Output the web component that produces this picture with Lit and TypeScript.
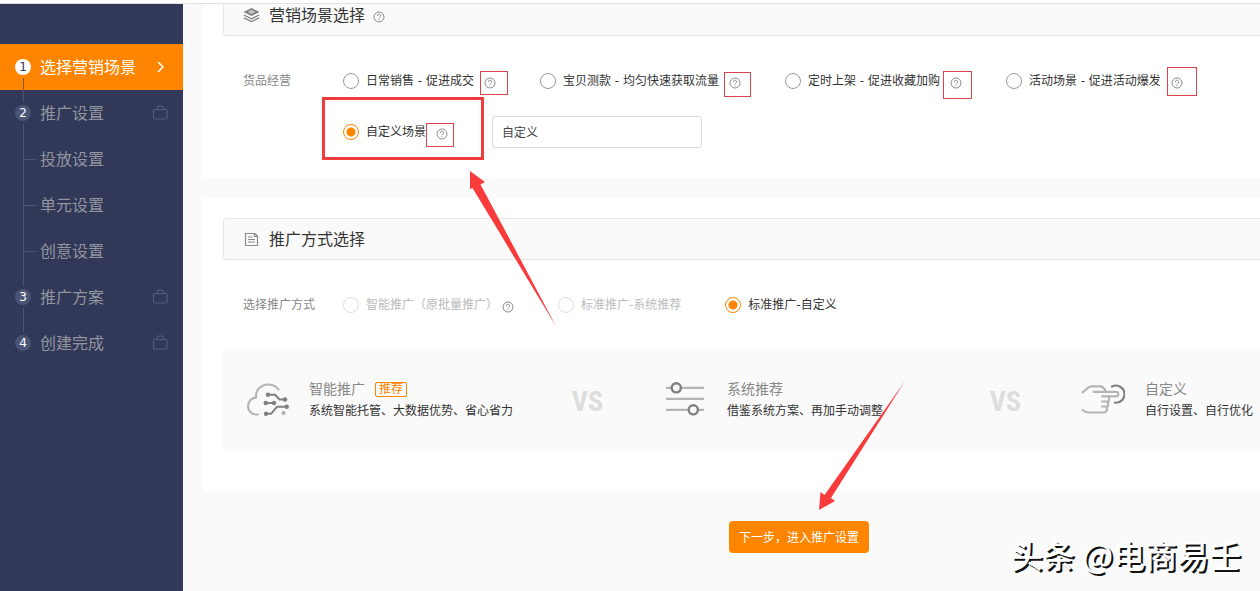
import { LitElement, html, css, svg, nothing } from "lit";
import { customElement, property } from "lit/decorators.js";

interface Step {
  label: string;
  no?: number;
  active?: boolean;
  last?: boolean;
}

const STEPS: Step[] = [
  { no: 1, label: "选择营销场景", active: true },
  { no: 2, label: "推广设置" },
  { label: "投放设置" },
  { label: "单元设置" },
  { label: "创意设置" },
  { no: 3, label: "推广方案" },
  { no: 4, label: "创建完成", last: true },
];

const SCENES = [
  "日常销售 - 促进成交",
  "宝贝测款 - 均匀快速获取流量",
  "定时上架 - 促进收藏加购",
  "活动场景 - 促进活动爆发",
];

const helpIcon = html`<svg width="12" height="12" viewBox="0 0 12 12" fill="none" stroke="currentColor">
  <circle cx="6" cy="6" r="5" />
  <path d="M4.4 4.9a1.6 1.6 0 1 1 2.4 1.3c-.6.3-.8.6-.8 1.1" />
  <path d="M6 8.2v1" />
</svg>`;

const bagIcon = html`<svg width="16" height="16" viewBox="0 0 16 16" fill="none" stroke="currentColor" stroke-width="1.200">
  <rect x="1.500" y="4.500" width="13.500" height="9.500" rx="1" />
  <path d="M4.500 4.500C4.800 1.800 6.200.8 8.200.8s3.400 1 3.700 3.700" />
</svg>`;

const chevronIcon = html`<svg width="16" height="16" viewBox="0 0 16 16" fill="none" stroke="currentColor" stroke-width="1.500">
  <path d="M6 3l5 5-5 5" />
</svg>`;

const layersIcon = html`<svg width="18" height="16" viewBox="0 0 18 16">
  <path d="M8.500 1l8 4-8 4-8-4z" fill="#808080" />
  <path d="M8.500 2.800l4 2.100-4 2.100-4-2.100z" fill="#c4c4c4" />
  <g fill="none" stroke="#808080" stroke-width="1.300">
    <path d="M.8 8l7.700 3.800L16.200 8" />
    <path d="M.8 10.800l7.700 3.800 7.700-3.800" />
  </g>
</svg>`;

const docIcon = html`<svg width="18" height="16" viewBox="0 0 18 16" fill="none" stroke="#8a8a8a" stroke-width="1.200">
  <path d="M2.500 2.500H12L14.500 5v9.500h-12z" />
  <path d="M11.500 2.500v3h3" />
  <path d="M5 6h4.500M5 8.500h7M5 11h7" />
</svg>`;

const cloudIcon = html`<svg width="44" height="36" viewBox="0 0 44 36" fill="none" stroke-linecap="round" stroke-linejoin="round">
  <path d="M13 32.500H11C6.500 32.500 3 28.500 3 24c0-4.300 3.300-8 8-8.300V14C11 7.500 16.500 2.500 23 2.500c4.500 0 8 1.800 10.500 5" stroke="#b5b5b5" stroke-width="2.200" />
  <g stroke="#808080" stroke-width="2">
    <path d="M23 12.800h7l4.500 4.700h5" />
    <path d="M21 21h7" />
    <path d="M21 31.800h5l6-7h9" />
  </g>
  <g fill="#808080">
    <circle cx="23" cy="12.800" r="2.200" />
    <circle cx="40" cy="17.500" r="2.200" />
    <circle cx="20.700" cy="21" r="2.200" />
    <circle cx="29" cy="21" r="2.200" />
    <circle cx="21" cy="31.800" r="2.200" />
    <circle cx="41.800" cy="24.800" r="2.200" />
  </g>
  <circle cx="38.500" cy="31" r="2" fill="#b0b0b0" />
</svg>`;

const slidersIcon = html`<svg width="44" height="36" viewBox="0 0 44 36" fill="none">
  <path d="M3 5.800h38M3 16.800h38M3 27.800h38" stroke="#b5b5b5" stroke-width="2.200" />
  <g fill="#fafafa" stroke="#808080" stroke-width="2.400">
    <circle cx="13.300" cy="5.800" r="4.600" />
    <circle cx="30.300" cy="27.800" r="4.600" />
  </g>
</svg>`;

const handIcon = html`<svg width="44" height="36" viewBox="0 0 44 36" fill="none" stroke="#b5b5b5" stroke-width="2.200" stroke-linecap="round" stroke-linejoin="round">
  <path d="M1.500 10.500L7 5.800C8.200 4.800 9.200 4.400 10.500 4.400h8.500c1.800 0 3 .6 4 2l1.500 2.600" />
  <path d="M12.500 9.800H35a2.300 2.300 0 0 1 0 4.600H21" />
  <path d="M28 14.800V18q0 1.500-1.500 1.500H21" />
  <path d="M27 20v3q0 1.500-1.500 1.500H21" />
  <path d="M26 25v1.500q0 4-3.500 4H8Q4.500 30.500 1.500 28" />
  <path d="M31 4.500a8.600 8.600 0 1 1 3 16.200" stroke="#808080" />
</svg>`;

@customElement("help-tip")
export class HelpTip extends LitElement {
  static styles = css`
    :host {
      display: inline-flex;
    }
    .tip {
      display: flex;
      padding: 3px 0 0;
      border: 0;
      background: none;
      color: #8c8c8c;
      cursor: help;
    }
  `;
  render() {
    return html`<button class="tip" type="button" aria-label="帮助">${helpIcon}</button>`;
  }
}

@customElement("radio-option")
export class RadioOption extends LitElement {
  @property() label = "";
  @property({ type: Boolean }) checked = false;
  @property({ type: Boolean }) disabled = false;
  @property({ type: Boolean }) help = false;
  @property({ type: Boolean }) tight = false;

  static styles = css`
    :host {
      display: flex;
      align-items: center;
      flex: none;
      min-height: 32px;
      gap: 10px;
    }
    :host([tight]) {
      gap: 4px;
    }
    .option {
      display: flex;
      align-items: center;
      gap: 7px;
      color: #333;
      white-space: nowrap;
    }
    .radio {
      appearance: none;
      box-sizing: border-box;
      width: 16px;
      height: 16px;
      margin: 0;
      border: 1px solid #999;
      border-radius: 50%;
      background: #fff;
    }
    .radio:checked {
      border-color: #fd8500;
      background: radial-gradient(circle, #fd8500 4px, #fff 5px);
    }
    .radio:disabled {
      border-color: #ddd;
    }
    .disabled {
      color: #bbb;
    }
  `;
  render() {
    return html`<label class="option ${this.disabled ? "disabled" : ""}">
        <input class="radio" type="radio" .checked=${this.checked} ?disabled=${this.disabled} />
        <span>${this.label}</span>
      </label>
      ${this.help ? html`<help-tip></help-tip>` : nothing}`;
  }
}

@customElement("step-nav")
export class StepNav extends LitElement {
  static styles = css`
    :host {
      display: block;
      flex: none;
      box-sizing: border-box;
      width: 183px;
      padding-top: 40px;
      background: #313858;
    }
    .step {
      display: flex;
      align-items: center;
      height: 46px;
      padding: 0 15px;
      color: #92949f;
      font-size: 16px;
      line-height: 24px;
      text-decoration: none;
    }
    .active {
      background: #ff8500;
      color: #fff;
    }
    .marker {
      display: flex;
      flex-direction: column;
      align-items: center;
      align-self: stretch;
      gap: 3px;
      width: 16px;
      margin-right: 9px;
    }
    .line {
      flex: 1;
      width: 1px;
      background: #4d5473;
    }
    .active .line {
      background: #7d5c3c;
    }
    .marker .blank {
      background: none;
    }
    .no {
      width: 16px;
      height: 16px;
      border-radius: 50%;
      background: #4a5475;
      color: #fff;
      font-size: 12px;
      line-height: 16px;
      text-align: center;
    }
    .active .no {
      background: #fff;
      color: #313858;
    }
    .branch {
      display: flex;
      align-items: center;
      align-self: stretch;
      width: 13px;
      margin: 0 3px 0 8px;
      border-left: 1px solid #4d5473;
    }
    .tick {
      width: 13px;
      height: 1px;
      background: #4d5473;
    }
    .label {
      flex: 1;
      padding-top: 2px;
      white-space: nowrap;
    }
    .icon {
      display: flex;
      color: #535a79;
    }
    .active .icon {
      color: #fff;
    }
  `;
  render() {
    return html`<nav>
      ${STEPS.map(
        (s) => html`<a class="step ${s.active ? "active" : ""}" href="#">
          ${s.no
            ? html`<span class="marker">
                <span class="line ${s.active ? "blank" : ""}"></span>
                <span class="no">${s.no}</span>
                <span class="line ${s.last ? "blank" : ""}"></span>
              </span>`
            : html`<span class="branch"><span class="tick"></span></span>`}
          <span class="label">${s.label}</span>
          ${s.no ? html`<span class="icon">${s.active ? chevronIcon : bagIcon}</span>` : nothing}
        </a>`
      )}
    </nav>`;
  }
}

@customElement("app-root")
export class AppRoot extends LitElement {
  static styles = css`
    :host {
      display: flex;
      flex-direction: column;
      position: relative;
      box-sizing: border-box;
      min-height: 100vh;
      overflow: hidden;
      background: #fafafa;
      color: #333;
      font-family: "DejaVu Sans", "Noto Sans CJK SC", sans-serif;
      font-size: 12px;
      line-height: 20px;
    }
    .topbar {
      flex: none;
      height: 3px;
      border-bottom: 1px solid #e2e2e2;
      background: #fff;
    }
    .body {
      display: flex;
      flex: 1;
    }
    .main {
      flex: 1;
      min-width: 0;
      overflow: hidden;
    }
    .content {
      min-width: 1232px;
      margin-top: -30px;
    }
    .panel {
      margin: 0 0 20px 20px;
      padding: 20px 0 30px 20px;
      background: #fff;
    }
    .tall {
      padding-bottom: 40px;
      margin-bottom: 30px;
    }
    .head {
      display: flex;
      align-items: center;
      gap: 8px;
      box-sizing: border-box;
      height: 42px;
      padding: 0 19px;
      border: 1px solid #e6e6e6;
      border-radius: 3px;
      background: #fafafa;
    }
    .title {
      margin: 0;
      padding-top: 2px;
      color: #333;
      font-size: 16px;
      font-weight: 400;
      line-height: 24px;
    }
    .field {
      display: flex;
      margin: 29px 0 0 20px;
    }
    .name {
      flex: none;
      width: 100px;
      color: #888;
      line-height: 32px;
    }
    .rows {
      display: flex;
      flex-direction: column;
      gap: 19px;
    }
    .row {
      display: flex;
      gap: 44px;
    }
    .text {
      box-sizing: border-box;
      width: 210px;
      height: 32px;
      padding: 0 9px 2px;
      border: 1px solid #ddd;
      border-radius: 3px;
      background: #fff;
      color: #444;
      font: inherit;
    }
    .compare {
      display: flex;
      min-height: 100px;
      margin-top: 30px;
      background: #fafafa;
    }
    .item {
      display: flex;
      align-items: center;
      flex: 0 0 418px;
      box-sizing: border-box;
      gap: 20px;
      padding: 0 38px 2px 22px;
      white-space: nowrap;
    }
    .kind {
      display: flex;
      align-items: center;
      gap: 10px;
      margin-bottom: 2px;
      color: #888;
      font-size: 14px;
      line-height: 20px;
    }
    .badge {
      padding: 0 3px;
      border: 1px solid #fd8500;
      border-radius: 2px;
      color: #fd8500;
      font-size: 12px;
      line-height: 13px;
    }
    .vs {
      margin-left: auto;
      padding-top: 4px;
      color: #ddd;
      font-family: "Liberation Sans Narrow", "Roboto Condensed", "Open Sans Condensed", "DejaVu Sans Condensed", sans-serif;
      font-size: 28px;
      font-weight: 700;
      line-height: 32px;
    }
    .actions {
      display: flex;
      justify-content: center;
      padding-bottom: 38px;
    }
    .next {
      height: 32px;
      padding: 2px 10px 0;
      border: 0;
      border-radius: 4px;
      background: #fd8500;
      color: #fff;
      font: inherit;
    }
    .marks {
      position: absolute;
      top: 0;
      left: 0;
      pointer-events: none;
    }
    .credit {
      position: absolute;
      right: 19px;
      bottom: 13px;
      color: #fff;
      font-family: "Noto Sans CJK SC", sans-serif;
      font-size: 32px;
      font-weight: 500;
      line-height: 48px;
      text-shadow: 2px 2px 0 #111;
      white-space: nowrap;
    }
  `;

  private marks() {
    const boxes = [
      [480, 71, 27, 23],
      [724, 72, 26, 24],
      [943, 71, 28, 27],
      [1167, 67, 29, 28],
      [426, 123, 27, 23],
    ];
    return html`<svg class="marks" width="1260" height="591" viewBox="0 0 1260 591" aria-hidden="true">
      ${boxes.map(
        ([x, y, w, h]) => svg`<rect x=${x + 0.5} y=${y + 0.5} width=${w} height=${h} fill="none" stroke="#d9434b" />`
      )}
      <rect x="323.500" y="98.500" width="159" height="60" fill="none" stroke="#f03c3c" stroke-width="3" />
      <path d="M470 171l15 11-4.500 2.500L556.500 327 472.500 188l-2.500 1z" fill="#f93b3b" />
      <path d="M819 510l1.500-18 4 3L905 381 831 498l4 3z" fill="#f93b3b" />
    </svg>`;
  }

  render() {
    return html`
      <div class="topbar"></div>
      <div class="body">
        <step-nav></step-nav>
        <main class="main">
          <div class="content">
            <section class="panel">
              <header class="head">
                ${layersIcon}
                <h2 class="title">营销场景选择</h2>
                <help-tip></help-tip>
              </header>
              <div class="field">
                <span class="name">货品经营</span>
                <div class="rows">
                  <div class="row">${SCENES.map((s) => html`<radio-option label=${s} help></radio-option>`)}</div>
                  <div class="row">
                    <radio-option label="自定义场景" checked help></radio-option>
                    <input class="text" type="text" aria-label="自定义场景" .value=${"自定义"} />
                  </div>
                </div>
              </div>
            </section>
            <section class="panel tall">
              <header class="head">
                ${docIcon}
                <h2 class="title">推广方式选择</h2>
              </header>
              <div class="field">
                <span class="name">选择推广方式</span>
                <div class="row">
                  <radio-option label="智能推广（原批量推广）" disabled help tight></radio-option>
                  <radio-option label="标准推广-系统推荐" disabled></radio-option>
                  <radio-option label="标准推广-自定义" checked></radio-option>
                </div>
              </div>
              <div class="compare">
                <div class="item">
                  ${cloudIcon}
                  <div>
                    <div class="kind">智能推广<span class="badge">推荐</span></div>
                    <div>系统智能托管、大数据优势、省心省力</div>
                  </div>
                  <span class="vs">VS</span>
                </div>
                <div class="item">
                  ${slidersIcon}
                  <div>
                    <div class="kind">系统推荐</div>
                    <div>借鉴系统方案、再加手动调整</div>
                  </div>
                  <span class="vs">VS</span>
                </div>
                <div class="item">
                  ${handIcon}
                  <div>
                    <div class="kind">自定义</div>
                    <div>自行设置、自行优化</div>
                  </div>
                </div>
              </div>
            </section>
            <div class="actions">
              <button class="next" type="button">下一步，进入推广设置</button>
            </div>
          </div>
        </main>
      </div>
      ${this.marks()}
      <div class="credit">头条 @电商易壬</div>
    `;
  }
}
